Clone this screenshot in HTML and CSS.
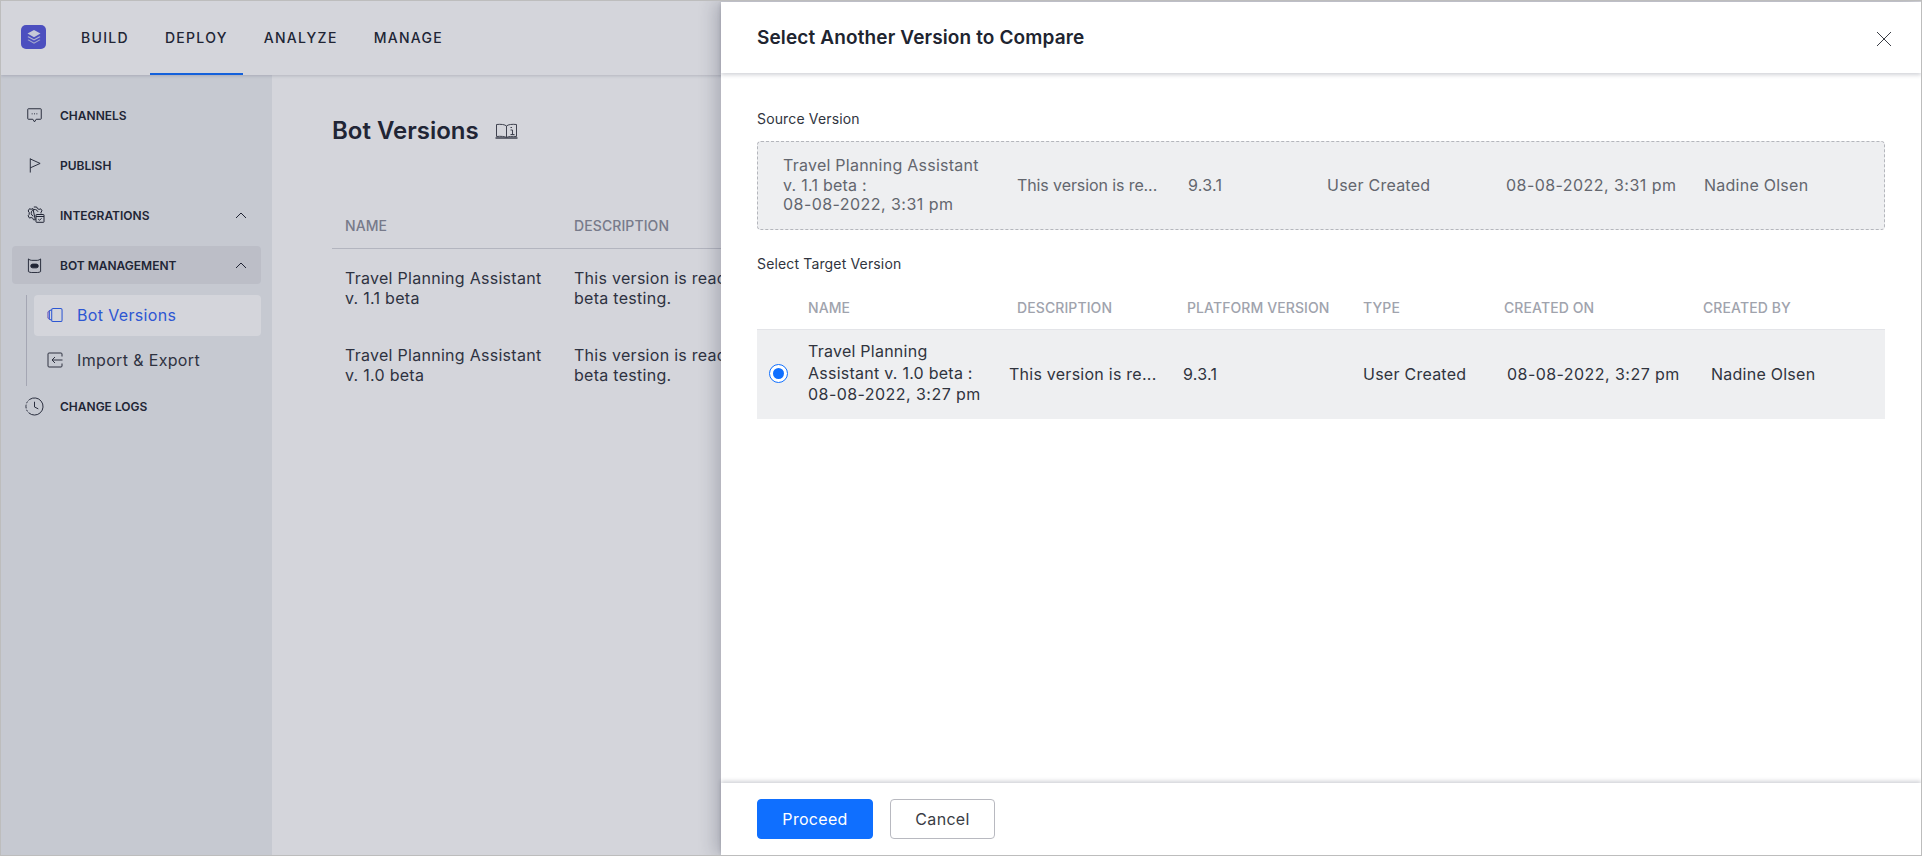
FILE: index.html
```html
<!DOCTYPE html>
<html lang="en">
<head>
    <meta charset="UTF-8">
    <meta name="viewport" content="width=device-width, initial-scale=1.0">
    <title>Bot Versions</title>
    <link rel="stylesheet" href="styles.css">
</head>
<body>
<div class="app">
    <header class="topbar">
        <div class="logo">
            <svg width="16" height="16" viewBox="0 0 16 16" fill="none">
                <path d="M8 1 14.5 4.6 8 8.2 1.5 4.6Z" fill="#eef0fb"/>
                <path d="M2.6 7.2 8 10.2 13.4 7.2 14.5 7.9 8 11.5 1.5 7.9Z" fill="#d5d8f3"/>
                <path d="M2.6 10.4 8 13.4 13.4 10.4 14.5 11.1 8 14.8 1.5 11.1Z" fill="#c3c7ee"/>
            </svg>
        </div>
        <nav class="topnav">
            <a class="topnav-item">BUILD</a>
            <a class="topnav-item active">DEPLOY</a>
            <a class="topnav-item">ANALYZE</a>
            <a class="topnav-item">MANAGE</a>
        </nav>
    </header>

    <div class="workspace">
        <aside class="sidebar">
            <div class="side-item">
                <svg class="side-icon" viewBox="0 0 16 16" fill="none" stroke="currentColor" stroke-width="1">
                    <path d="M1.500.8h13a.7.7 0 0 1 .7.7v9.800a.7.7 0 0 1-.7.7h-4.700L8 14.800l-1.800-2.800H1.500a.7.7 0 0 1-.7-.7V1.500a.7.7 0 0 1 .7-.7Z"/>
                    <path d="M5 6.200h1M7.500 6.200h1M10 6.200h1"/>
                </svg>
                <span>CHANNELS</span>
            </div>
            <div class="side-item">
                <svg class="side-icon" viewBox="0 0 16 16" fill="none" stroke="currentColor" stroke-width="1">
                    <path d="M3.500 15.500V.5"/>
                    <path d="M3.500 1 14 5.800 3.500 10.500"/>
                </svg>
                <span>PUBLISH</span>
            </div>
            <div class="side-item">
                <svg class="side-icon big" viewBox="0 0 18 18" fill="none" stroke="currentColor" stroke-width="1">
                    <path d="M6.800 1h2.900l.7 1.600 1.700.8 1.600-.6 1.300 2-1 1.400v1.300M8.300 13.800H6.500L5.800 12.200l-1.700-.7-1.600.6L1.100 9.800l1.100-1.400V6.300L1.100 5 2.500 2.700l1.600.6 1.800-.8Z"/>
                    <path d="M11 5.800A3.500 3.500 0 1 0 6.300 10.200"/>
                    <rect x="9" y="8.500" width="8" height="7.800" rx=".5"/>
                    <path d="M9 10.500h8M11.300 13.200l1.200 1.100 2-2"/>
                </svg>
                <span>INTEGRATIONS</span>
                <svg class="chevron" viewBox="0 0 12 7" fill="none" stroke="currentColor" stroke-width="1"><path d="M1 6 6 1l5 5"/></svg>
            </div>
            <div class="side-item open">
                <svg class="side-icon" viewBox="0 0 16 16" fill="none" stroke="currentColor" stroke-width="1">
                    <path d="M1.500 1c1 1 2.200 1.500 3.500 1.500h6C12.300 2.500 13.500 2 14.500 1v13.500c-1 .7-2.200 1-3.500 1H5c-1.300 0-2.500-.3-3.500-1Z"/>
                    <rect x="4" y="6.500" width="8" height="4" rx="2" fill="currentColor"/>
                </svg>
                <span>BOT MANAGEMENT</span>
                <svg class="chevron" viewBox="0 0 12 7" fill="none" stroke="currentColor" stroke-width="1"><path d="M1 6 6 1l5 5"/></svg>
            </div>
            <div class="side-sub">
                <div class="sub-item current">
                    <svg class="sub-icon" viewBox="0 0 17 16" fill="none" stroke="currentColor" stroke-width="1.100">
                        <rect x="5" y="1" width="11" height="14" rx="1.500"/>
                        <path d="M5 2.500 2.500 3.500V12.500L5 13.500"/>
                        <path d="M2.500 4 1 5V11L2.500 12" stroke="#7d5fd8"/>
                    </svg>
                    <span>Bot Versions</span>
                </div>
                <div class="sub-item">
                    <svg class="sub-icon" viewBox="0 0 16 16" fill="none" stroke="currentColor" stroke-width="1">
                        <path d="M15 4.500V2a1 1 0 0 0-1-1H2a1 1 0 0 0-1 1v12a1 1 0 0 0 1 1h12a1 1 0 0 0 1-1v-2.500"/>
                        <path d="M15.500 8H5M8 5 5 8l3 3"/>
                    </svg>
                    <span>Import &amp; Export</span>
                </div>
            </div>
            <div class="side-item logs">
                <svg class="side-icon wide" viewBox="0 0 20 20" fill="none" stroke="currentColor" stroke-width="1">
                    <path d="M5 2.500A9 9 0 1 1 4 16.700"/>
                    <path d="M1 10a9 9 0 0 1 4-7.500M1 10c0 2.600 1 5 3 6.700" stroke-dasharray="2 1.500"/>
                    <path d="M10 5v5.500l4 2"/>
                </svg>
                <span>CHANGE LOGS</span>
            </div>
        </aside>

        <main class="content">
            <div class="page-title">
                <h1>Bot Versions</h1>
                <svg width="23" height="16" viewBox="0 0 23 16" fill="none" stroke="#454850" stroke-width="1">
                    <path d="M11.500 3C10 1.500 6 1 1.500 1.500V13.500C6 13 10 13.500 11.500 14.500 13 13.500 17 13 21.500 13.500V1.500C17 1 13 1.500 11.500 3ZM11.500 3V14.500"/>
                    <path d="M.5 15h22" stroke-width="1.500"/>
                    <path d="M15.500 4.500h1.500M15.500 7h2v4.500M15.500 11.500h4"/>
                </svg>
            </div>
            <div class="bot-table">
                <div class="bot-head">
                    <span>NAME</span>
                    <span>DESCRIPTION</span>
                </div>
                <div class="bot-row">
                    <span>Travel Planning Assistant<br>v. 1.1 beta</span>
                    <span>This version is ready for<br>beta testing.</span>
                </div>
                <div class="bot-row">
                    <span>Travel Planning Assistant<br>v. 1.0 beta</span>
                    <span>This version is ready for<br>beta testing.</span>
                </div>
            </div>
        </main>
    </div>

    <div class="backdrop"></div>

    <section class="panel">
        <div class="panel-head">
            <h2>Select Another Version to Compare</h2>
            <svg class="close" width="16" height="16" viewBox="0 0 16 16" fill="none" stroke="#3a3d45" stroke-width="1"><path d="M1 1l14 14M15 1 1 15"/></svg>
        </div>
        <div class="panel-body">
            <div class="field-label">Source Version</div>
            <div class="source-box">
                <span>Travel Planning Assistant<br>v. 1.1 beta :<br><span class="date">08-08-2022, 3:31 pm</span></span>
                <span class="short-desc">This version is re...</span>
                <span>9.3.1</span>
                <span>User Created</span>
                <span class="date">08-08-2022, 3:31 pm</span>
                <span>Nadine Olsen</span>
            </div>
            <div class="field-label target">Select Target Version</div>
            <div class="target-head">
                <span></span>
                <span>NAME</span>
                <span>DESCRIPTION</span>
                <span>PLATFORM VERSION</span>
                <span>TYPE</span>
                <span>CREATED ON</span>
                <span>CREATED BY</span>
            </div>
            <div class="target-row">
                <span class="radio"></span>
                <span class="target-name">Travel Planning<br>Assistant v. 1.0 beta :<br><span class="date">08-08-2022, 3:27 pm</span></span>
                <span>This version is re...</span>
                <span>9.3.1</span>
                <span>User Created</span>
                <span class="date">08-08-2022, 3:27 pm</span>
                <span>Nadine Olsen</span>
            </div>
        </div>
        <div class="panel-foot">
            <button class="btn primary">Proceed</button>
            <button class="btn">Cancel</button>
        </div>
    </section>
</div>
</body>
</html>
```

FILE: styles.css
```css
* {
    box-sizing: border-box;
}

html, body {
    margin: 0;
    height: 100%;
    overflow: hidden;
}

body {
    font-family: Inter, "Liberation Sans", sans-serif;
    color: #202430;
    background: #ffffff;
}

.app {
    position: relative;
    height: 856px;
    display: flex;
    flex-direction: column;
    overflow: hidden;
    border: 1px solid #bdbdbd;
}

/* top bar */
.topbar {
    height: 74px;
    flex: none;
    display: flex;
    align-items: center;
    padding-left: 20px;
    background: #ffffff;
    box-shadow: 0 1px 3px rgba(30, 35, 60, 0.18);
    position: relative;
    z-index: 1;
}

.logo {
    width: 25px;
    height: 24px;
    margin-top: -2px;
    border-radius: 5px;
    background: #5558dc;
    display: flex;
    align-items: center;
    justify-content: center;
}

.topnav {
    display: flex;
    gap: 6px;
    margin-left: 20px;
    align-self: stretch;
}

.topnav-item {
    display: flex;
    align-items: center;
    padding: 0 15px;
    font-size: 14px;
    font-weight: 500;
    letter-spacing: 1.3px;
    color: #202430;
    border-bottom: 2px solid transparent;
}

.topnav-item.active {
    border-bottom-color: #0f6fff;
}

/* left nav */
.workspace {
    flex: 1;
    display: flex;
    min-height: 0;
}

.sidebar {
    width: 271px;
    flex: none;
    padding: 21px 11px 0;
    background: #eef0f3;
}

.side-item {
    height: 38px;
    margin-bottom: 12px;
    padding-left: 15px;
    display: flex;
    align-items: center;
    gap: 18px;
    font-size: 12px;
    font-weight: 600;
    border-radius: 4px;
    color: #202430;
}

.side-item.open {
    background: #e1e3e7;
    margin-bottom: 11px;
}

.side-item span {
    flex: 1;
}

.side-icon {
    width: 15px;
    height: 15px;
    flex: none;
}

.side-icon.big {
    width: 18px;
    height: 18px;
    margin-right: -3px;
}

.side-icon.wide {
    width: 19px;
    height: 19px;
    margin-left: -2px;
    margin-right: -2px;
}

.chevron {
    width: 12px;
    height: 7px;
    margin-right: 14px;
    flex: none;
}

.side-sub {
    margin: 0 0 0 14px;
    padding-left: 7px;
    border-left: 1px solid #c3c5cd;
    height: 91px;
}

.side-sub .sub-item {
    height: 41px;
    margin-bottom: 4px;
    padding: 0 0 2px 13px;
    display: flex;
    align-items: center;
    gap: 14px;
    font-size: 16px;
    letter-spacing: 0.35px;
    border-radius: 4px;
    color: #30343e;
}

.sub-item.current {
    background: #ffffff;
    color: #2f62f5;
}

.sub-icon {
    width: 16px;
    height: 16px;
    flex: none;
}

.side-item.logs {
    margin-top: 1px;
}

/* page behind the panel */
.content {
    flex: 1;
    padding: 41px 0 0 60px;
    background: #ffffff;
    overflow: hidden;
}

.page-title {
    display: flex;
    align-items: center;
    gap: 16px;
}

.page-title h1 {
    margin: 0;
    font-size: 24px;
    font-weight: 600;
    line-height: 30px;
    color: #202430;
}

.bot-table {
    margin-top: 71px;
}

.bot-head {
    display: grid;
    grid-template-columns: 229px 1fr;
    height: 32px;
    padding-left: 13px;
    border-bottom: 1px solid #d6d7dc;
    font-size: 14px;
    letter-spacing: 0.1px;
    font-weight: 500;
    color: #8b8e9a;
}

.bot-row {
    display: grid;
    grid-template-columns: 229px 1fr;
    padding: 19px 0 0 13px;
    height: 77px;
    font-size: 16px;
    letter-spacing: 0.28px;
    line-height: 20px;
    color: #30343e;
}

.backdrop {
    position: absolute;
    inset: 0;
    z-index: 2;
    background: rgba(41, 47, 76, 0.2);
}

/* compare panel */
.panel {
    position: absolute;
    top: 1px;
    right: 0;
    bottom: 0;
    width: 1200px;
    z-index: 3;
    display: flex;
    flex-direction: column;
    background: #ffffff;
    box-shadow: -6px 0 16px rgba(30, 35, 60, 0.22);
}

.panel-head {
    height: 71px;
    flex: none;
    display: flex;
    align-items: center;
    justify-content: space-between;
    padding: 0 29px 0 36px;
    box-shadow: 0 2px 4px rgba(30, 35, 60, 0.2);
}

.panel-head h2 {
    margin: 0;
    font-size: 19px;
    letter-spacing: 0.13px;
    font-weight: 600;
    color: #202430;
}

.close {
    margin-top: 2px;
}

.panel-body {
    flex: 1;
    padding: 38px 36px 0;
}

.field-label {
    font-size: 14px;
    letter-spacing: 0.15px;
    line-height: 16px;
    color: #30343e;
}

.field-label.target {
    margin-top: 26px;
}

.source-box {
    margin-top: 14px;
    height: 89px;
    padding-left: 25px;
    display: grid;
    grid-template-columns: 234px 171px 139px 179px 198px 1fr;
    align-items: center;
    background: #eeeff1;
    border: 1px dashed #b4b6bc;
    border-radius: 4px;
    font-size: 16px;
    letter-spacing: 0.25px;
    line-height: 19.5px;
    color: #63666e;
}

.short-desc {
    letter-spacing: -0.1px;
}

.date {
    letter-spacing: 0.45px;
}

.target-head {
    margin-top: 27px;
    height: 31px;
    display: grid;
    grid-template-columns: 51px 209px 170px 176px 141px 199px 1fr;
    border-bottom: 1px solid #e3e4e8;
    font-size: 14px;
    letter-spacing: 0.1px;
    font-weight: 500;
    color: #a0a3ad;
}

.target-row {
    height: 89px;
    padding-bottom: 2px;
    display: grid;
    grid-template-columns: 51px 201px 174px 180px 144px 204px 1fr;
    align-items: center;
    background: #eeeff1;
    font-size: 16px;
    letter-spacing: 0.25px;
    color: #30343e;
}

.target-name {
    line-height: 21.5px;
}

.radio {
    width: 19px;
    height: 19px;
    margin-left: 12px;
    border-radius: 50%;
    border: 1.500px solid #0f6fff;
    background: #ffffff;
    display: flex;
    align-items: center;
    justify-content: center;
}

.radio::after {
    content: "";
    width: 11px;
    height: 11px;
    border-radius: 50%;
    background: #0f6fff;
}

.panel-foot {
    height: 72px;
    flex: none;
    display: flex;
    align-items: flex-start;
    gap: 17px;
    padding: 16px 0 0 36px;
    box-shadow: 0 -2px 4px rgba(30, 35, 60, 0.2);
}

.btn {
    height: 40px;
    width: 105px;
    font-family: inherit;
    font-size: 16px;
    letter-spacing: 0.3px;
    color: #3a3d45;
    background: #ffffff;
    border: 1px solid #b8b9c0;
    border-radius: 4px;
}

.btn.primary {
    width: 116px;
    color: #ffffff;
    background: #0f6fff;
    border-color: #0f6fff;
}
```
